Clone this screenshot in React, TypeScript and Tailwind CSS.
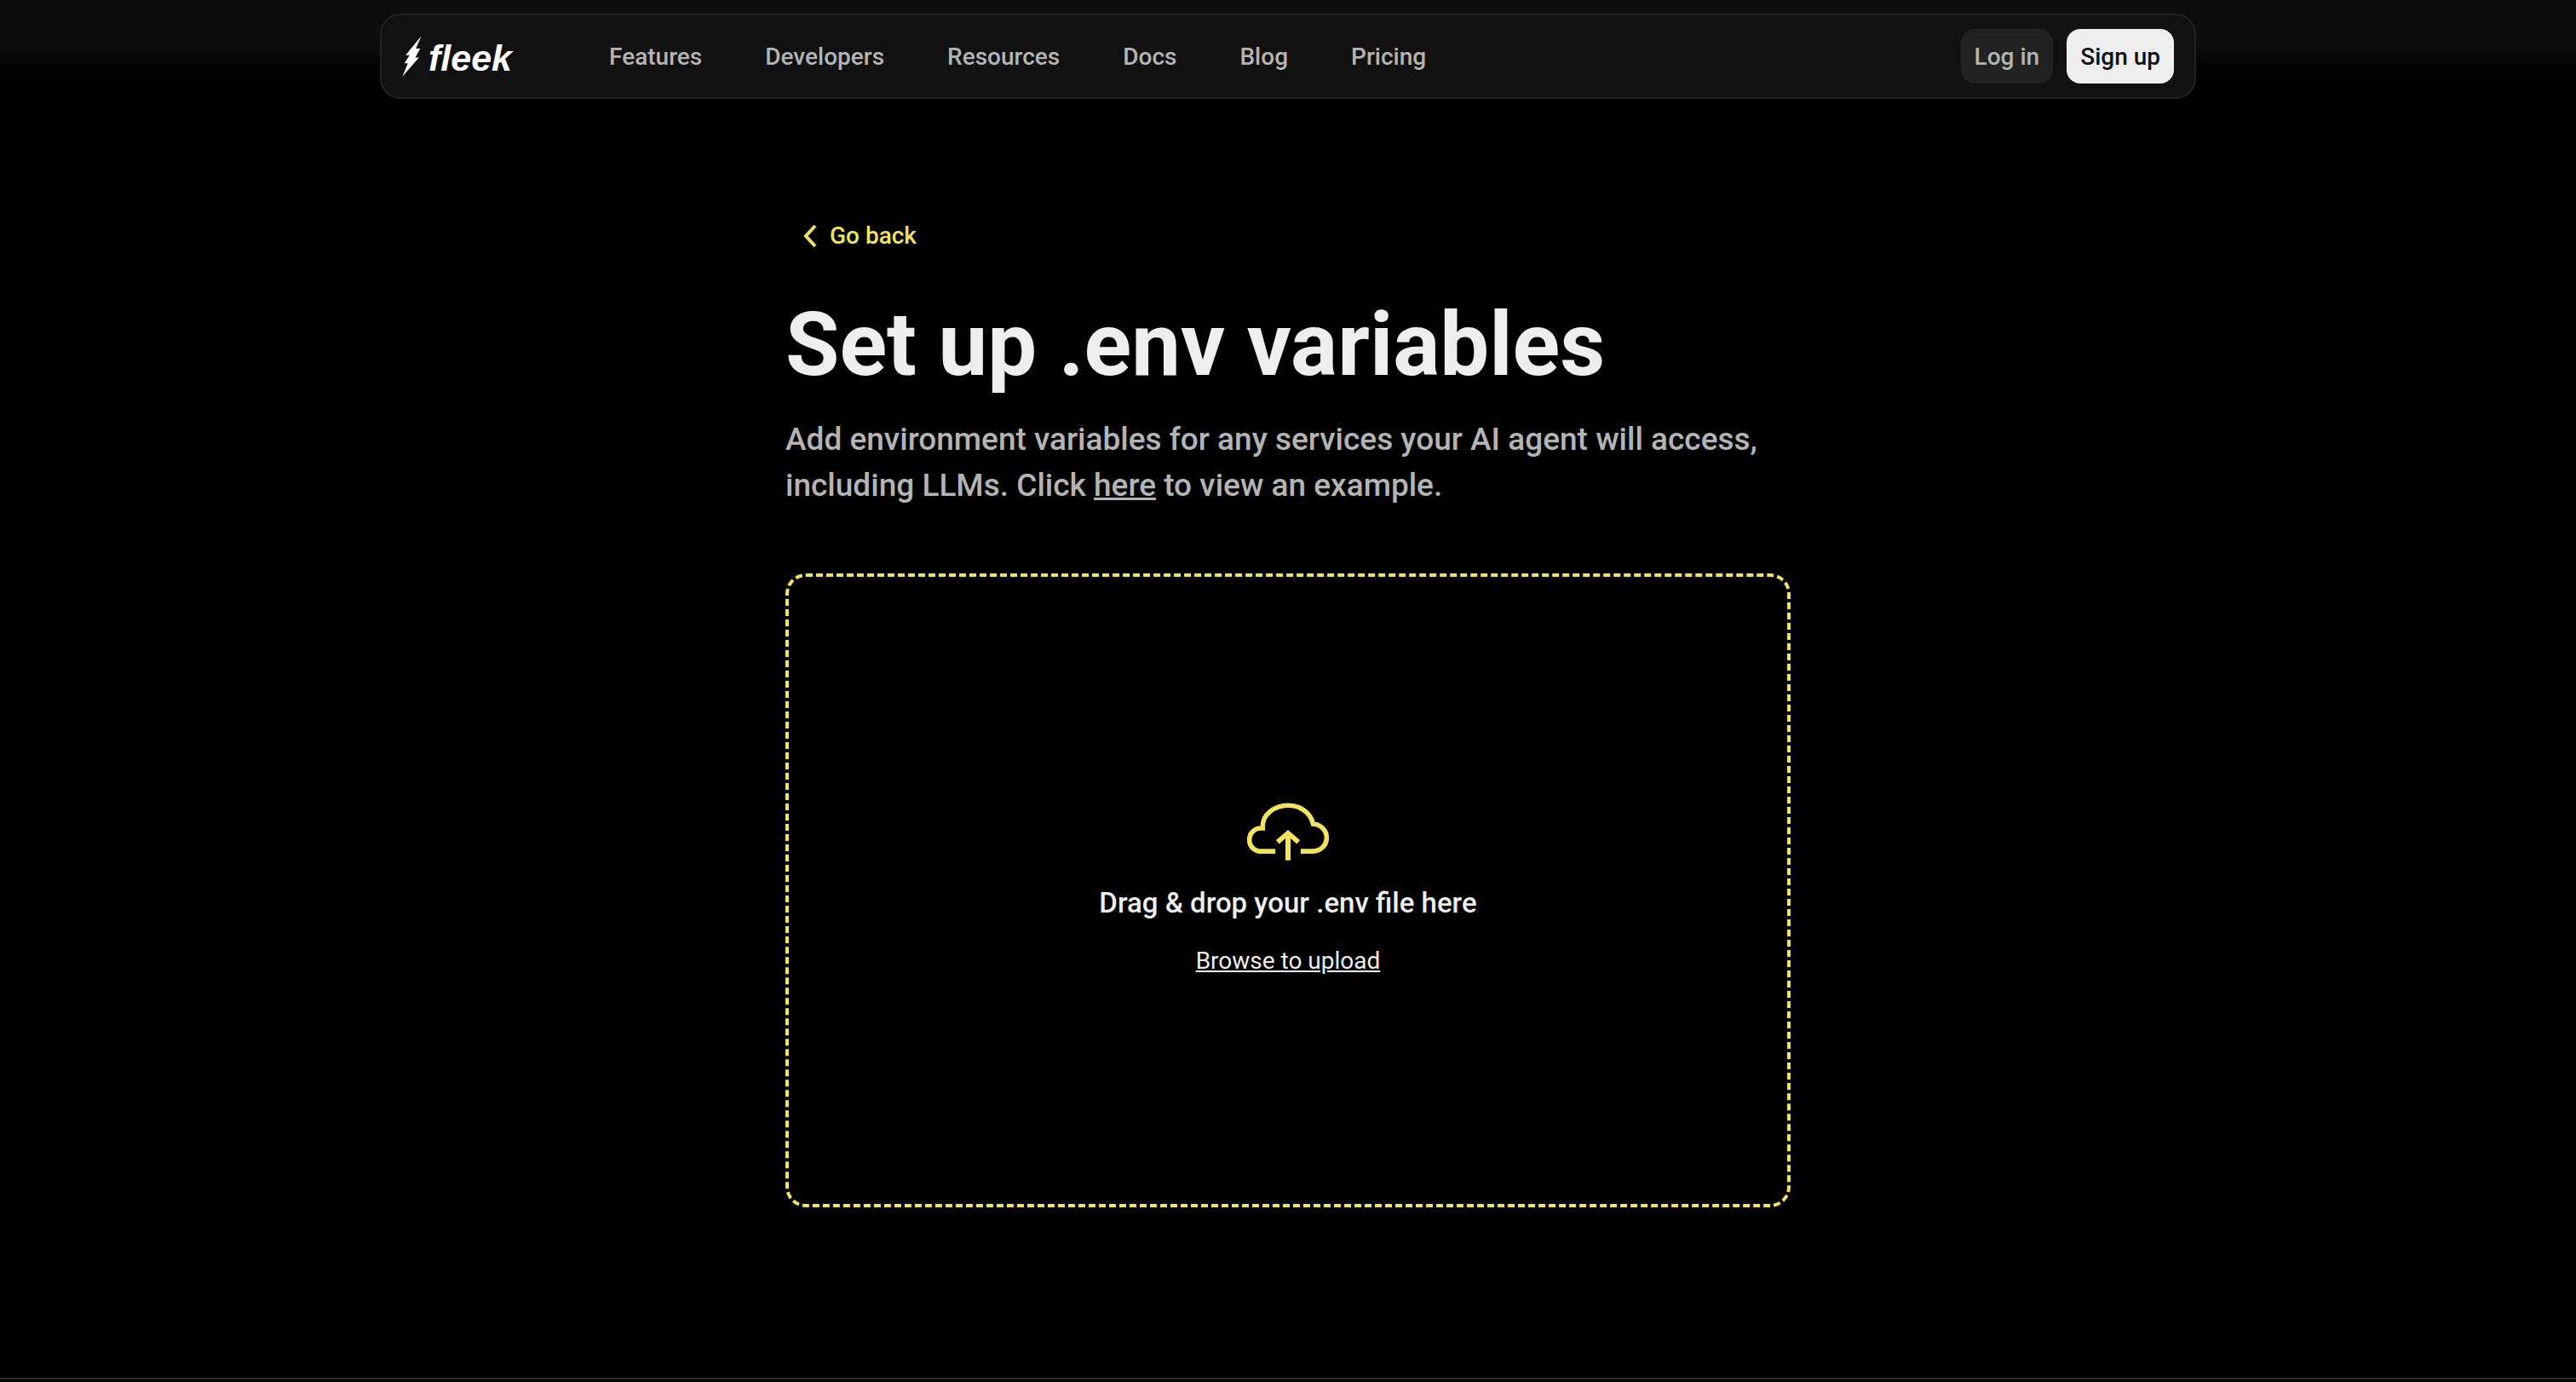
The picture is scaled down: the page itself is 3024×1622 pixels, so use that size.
const links = ['Features', 'Developers', 'Resources', 'Docs', 'Blog', 'Pricing'];

function Logo() {
  return (
    <a href="#" className="flex items-center gap-2 text-white" aria-label="fleek">
      <svg viewBox="18 14 68 143" className="h-12 w-[23px]" fill="currentColor" aria-hidden="true">
        <path d="M85 15L30 82H44L26 110H38L19 156L77 90H64L81 59H66Z" />
      </svg>
      <span className="pt-1 font-['Liberation_Sans',sans-serif] text-[43px] leading-12 font-bold italic">fleek</span>
    </a>
  );
}

function Header() {
  return (
    <header className="h-33 bg-linear-to-b from-[#0d0d0d] from-40% to-black px-6 pt-4">
      <div className="mx-auto flex h-25 w-full max-w-[2132px] items-center rounded-3xl border-2 border-[#222222] bg-[#111111] px-6">
        <Logo />
        <nav className="ml-[114px] flex items-center gap-[74px] pt-0.5 text-[28px] font-medium text-[#b4b4b4]">
          {links.map((name) => (
            <a key={name} href="#">
              {name}
            </a>
          ))}
        </nav>
        <div className="ml-auto flex gap-4 text-[28px] font-medium">
          <button type="button" className="h-16 rounded-2xl bg-[#222222] px-4 pt-0.5 text-[#b4b4b4]">
            Log in
          </button>
          <button type="button" className="h-16 rounded-2xl bg-[#eeeeee] px-4 pt-0.5 text-[#111111]">
            Sign up
          </button>
        </div>
      </div>
    </header>
  );
}

function CloudUpload() {
  return (
    <svg viewBox="38 36 296 204" className="h-17 w-[98px] text-[#f3e260]" fill="none" stroke="currentColor" strokeWidth="17" aria-hidden="true">
      <path d="M141 208H90C66 208 49 190 49 167C49 144 67 126 90 126H96V120C96 78 137 45 186 45C231 45 267 73 275 111C302 113 323 133 323 160C323 187 301 208 273 208H231" />
      <path d="M186 240V146" strokeWidth="18" />
      <path d="M149 175L186 143L223 175" />
    </svg>
  );
}

export default function App() {
  return (
    <div className="min-h-screen bg-black font-[Roboto,sans-serif]">
      <Header />
      <main className="mx-auto w-full max-w-[1180px] pt-[113px]">
        <a href="#" className="flex h-16 w-fit items-center gap-3.5 px-5 text-[28px] font-medium text-[#f3e260]">
          <svg viewBox="0 0 18 28" className="h-7 w-[18px]" fill="none" stroke="currentColor" strokeWidth="4" aria-hidden="true">
            <path d="M15 2L4 14L15 26" />
          </svg>
          Go back
        </a>
        <h1 className="mt-11 text-[103px] leading-[104px] font-bold text-[#eeeeee]">Set up .env variables</h1>
        <p className="mt-8 text-[37px] leading-[54px] font-medium text-[#b4b4b4]">
          Add environment variables for any services your AI agent will access, including LLMs. Click{' '}
          <a href="#" className="underline">
            here
          </a>{' '}
          to view an example.
        </p>
        <section className="mt-[76px] flex h-[744px] flex-col items-center justify-center rounded-3xl border-4 border-dashed border-[#f3e260] text-[#eeeeee]">
          <CloudUpload />
          <p className="mt-7 text-[33px] leading-11 font-medium">Drag &amp; drop your .env file here</p>
          <button type="button" className="mt-[26px] text-[28px] leading-10 underline">
            Browse to upload
          </button>
        </section>
      </main>
      <footer className="mt-50 border-t-2 border-[#2a2a2a]" />
    </div>
  );
}
